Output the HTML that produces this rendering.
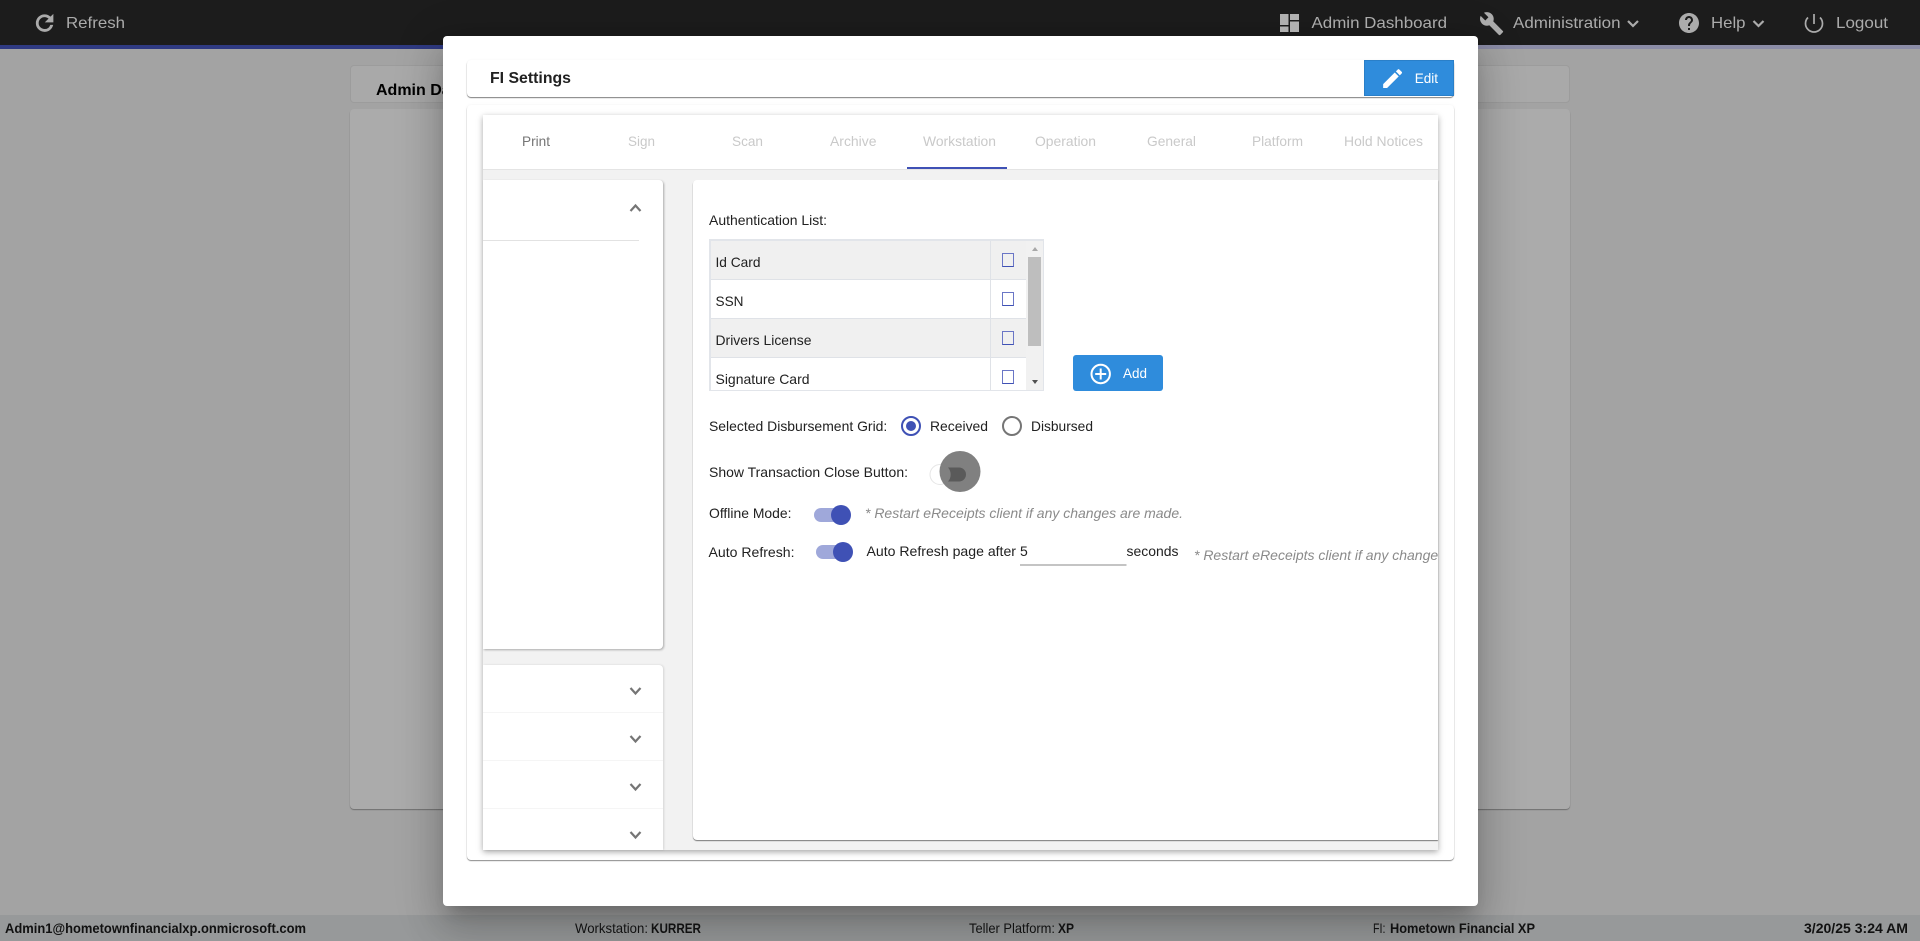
<!DOCTYPE html>
<html><head><meta charset="utf-8"><title>FI Settings</title>
<style>
html,body{margin:0;padding:0;width:1920px;height:941px;overflow:hidden;background:#a3a3a3;font-family:"Liberation Sans",sans-serif}
div{position:absolute;box-sizing:border-box}
svg{position:absolute;left:0;top:0}
text{font-family:"Liberation Sans",sans-serif;font-size:14px;fill:#212121}
.n{fill:#ababab;font-size:16px}
.t{fill:#c9c9c9}
.f{font-size:14px;fill:#111}
.b{font-weight:bold}
.i{font-style:italic;fill:#8a8a8a}
</style></head><body>
<div style="left:0;top:0;width:1920px;height:45px;background:#1c1c1c"></div>
<div style="left:0;top:45px;width:443px;height:4px;background:#2f3a82"></div>
<div style="left:1478px;top:45px;width:442px;height:4px;background:#8b8ca6"></div>
<div style="left:350px;top:65px;width:1220px;height:38px;background:#a9a9a9;border:1px solid #9c9c9c;border-radius:4px;overflow:hidden"><span style="position:absolute;left:25px;top:16px;font-size:16px;font-weight:bold;color:#000;white-space:nowrap">Admin Dashboard</span></div>
<div style="left:350px;top:109px;width:1220px;height:700px;background:#ababab;border-radius:4px;box-shadow:0 1px 1px #6f6f6f"></div>
<div style="left:0;top:915px;width:1920px;height:26px;background:#97999a"></div>
<div style="left:443px;top:36px;width:1035px;height:870px;background:#fff;border-radius:4px;box-shadow:0 11px 15px -7px rgba(0,0,0,.2),0 24px 38px 3px rgba(0,0,0,.14),0 9px 46px 8px rgba(0,0,0,.12)"></div>
<div style="left:467px;top:60px;width:987px;height:37px;background:#fff;border-radius:4px;box-shadow:0 1px 1px rgba(0,0,0,.5),0 0 2px rgba(0,0,0,.04)"></div>
<div style="left:1364px;top:60px;width:90px;height:36px;background:#2f8cdc;border:1px solid #2a7fc8"></div>
<div style="left:467px;top:105px;width:987px;height:755px;background:#fff;border-radius:4px;box-shadow:0 1px 1px rgba(0,0,0,.45),0 0 3px rgba(0,0,0,.05)"></div>
<div style="left:483px;top:115px;width:955px;height:735px;background:#f2f2f2;box-shadow:0 2px 6px rgba(0,0,0,.35)"></div>
<div style="left:483px;top:115px;width:955px;height:55px;background:#fff;border-bottom:1px solid #e4e4e4"></div>
<div style="left:907px;top:167px;width:100px;height:2px;background:#3f51b5"></div>
<div style="left:483px;top:180px;width:180px;height:469px;background:#fff;border-radius:0 4px 4px 0;box-shadow:1px 1px 2px rgba(0,0,0,.3)"></div>
<div style="left:483px;top:240px;width:156px;height:1px;background:#e2e2e2"></div>
<div style="left:483px;top:665px;width:180px;height:185px;background:#fff;border-radius:0 4px 0 0;box-shadow:1px 0 2px rgba(0,0,0,.12)"></div>
<div style="left:483px;top:712px;width:180px;height:1px;background:#f5f5f5"></div>
<div style="left:483px;top:760px;width:180px;height:1px;background:#f5f5f5"></div>
<div style="left:483px;top:808px;width:180px;height:1px;background:#f5f5f5"></div>
<div style="left:693px;top:180px;width:745px;height:660px;background:#fff;border-radius:4px 0 0 4px;box-shadow:0 1px 1px rgba(0,0,0,.5)"></div>
<!-- table -->
<div style="left:709px;top:239px;width:335px;height:152px;background:#f1f1f1;border:2px solid #e2e5ea;border-width:2px 1px 1px 2px;overflow:hidden">
<div style="left:0;top:0;width:315px;height:39px;background:#f0f0f0;border-bottom:1px solid #dfe2e7"></div>
<div style="left:0;top:39px;width:315px;height:39px;background:#fff;border-bottom:1px solid #dfe2e7"></div>
<div style="left:0;top:78px;width:315px;height:39px;background:#f0f0f0;border-bottom:1px solid #dfe2e7"></div>
<div style="left:0;top:117px;width:315px;height:39px;background:#fff"></div>
<div style="left:279px;top:0;width:1px;height:152px;background:#dfe2e7"></div>
<div style="left:317px;top:16px;width:13px;height:89px;background:#bebebe"></div>
</div>
<div style="left:1002px;top:253px;width:12px;height:14px;border:1px solid #6a76c6;border-bottom-color:#3f51b5;background:transparent"></div>
<div style="left:1002px;top:292px;width:12px;height:14px;border:1px solid #6a76c6;border-bottom-color:#3f51b5"></div>
<div style="left:1002px;top:331px;width:12px;height:14px;border:1px solid #6a76c6;border-bottom-color:#3f51b5"></div>
<div style="left:1002px;top:370px;width:12px;height:14px;border:1px solid #6a76c6;border-bottom-color:#3f51b5"></div>
<div style="left:1073px;top:355px;width:90px;height:36px;background:#2f8cdc;border-radius:3px"></div>

<svg width="1920" height="941" viewBox="0 0 1920 941" xmlns="http://www.w3.org/2000/svg">
<defs><clipPath id="c"><rect x="693" y="180" width="745" height="660"/></clipPath></defs>
<!-- top nav -->
<path transform="translate(32 10.5) scale(1.05)" fill="#ababab" stroke="#ababab" stroke-width=".7" d="M17.65 6.35C16.2 4.9 14.21 4 12 4c-4.42 0-7.99 3.58-7.99 8s3.57 8 7.99 8c3.73 0 6.84-2.55 7.73-6h-2.08c-.82 2.33-3.04 4-5.65 4-3.31 0-6-2.69-6-6s2.69-6 6-6c1.66 0 3.14.69 4.22 1.78L13 11h7V4l-2.35 2.35z"/>
<text class="n" x="66" y="28" textLength="59" lengthAdjust="spacingAndGlyphs">Refresh</text>
<g fill="#b0b0b0">
<rect x="1280" y="14" width="8.5" height="11"/>
<rect x="1280" y="26.5" width="8.5" height="5.5"/>
<rect x="1290" y="14" width="9" height="6"/>
<rect x="1290" y="21.5" width="9" height="10.5"/>
</g>
<text class="n" x="1311.5" y="28" textLength="135.5" lengthAdjust="spacingAndGlyphs">Admin Dashboard</text>
<path transform="translate(1479 11) scale(1.05)" fill="#ababab" d="M22.7 19l-9.1-9.1c.9-2.3.4-5-1.5-6.9-2-2-5-2.4-7.4-1.3L9 6 6 9 1.6 4.7C.4 7.1.9 10.1 2.9 12.1c1.9 1.9 4.6 2.4 6.9 1.5l9.1 9.1c.4.4 1 .4 1.4 0l2.3-2.3c.5-.4.5-1.1.1-1.4z"/>
<text class="n" x="1513" y="28" textLength="107.5" lengthAdjust="spacingAndGlyphs">Administration</text>
<path d="M1628 21l5 5 5-5" fill="none" stroke="#ababab" stroke-width="2.2"/>
<path transform="translate(1677 11)" fill="#ababab" d="M12 2C6.48 2 2 6.48 2 12s4.48 10 10 10 10-4.48 10-10S17.52 2 12 2zm1 17h-2v-2h2v2zm2.07-7.75l-.9.92C13.45 12.9 13 13.5 13 15h-2v-.5c0-1.1.45-2.1 1.17-2.83l1.24-1.26c.37-.36.59-.86.59-1.41 0-1.1-.9-2-2-2s-2 .9-2 2H8c0-2.21 1.79-4 4-4s4 1.79 4 4c0 .88-.36 1.68-.93 2.25z"/>
<text class="n" x="1711" y="28" textLength="34.5" lengthAdjust="spacingAndGlyphs">Help</text>
<path d="M1753.5 21l5 5 5-5" fill="none" stroke="#ababab" stroke-width="2.2"/>
<path d="M1808 17.5a8.5 8.5 0 1 0 12 0M1814 14v10" fill="none" stroke="#ababab" stroke-width="1.7"/>
<text class="n" x="1836" y="28" textLength="52" lengthAdjust="spacingAndGlyphs">Logout</text>
<!-- header -->
<text x="490" y="83" class="b" style="font-size:16px" textLength="81" lengthAdjust="spacingAndGlyphs">FI Settings</text>
<path transform="translate(1380 66) scale(1.05)" fill="#fff" d="M3 17.25V21h3.75L17.81 9.94l-3.75-3.75L3 17.25zM20.71 7.04c.39-.39.39-1.02 0-1.41l-2.34-2.34c-.39-.39-1.02-.39-1.41 0l-1.83 1.83 3.75 3.75 1.83-1.83z"/>
<text x="1414.7" y="83" style="fill:#fff" textLength="23.3" lengthAdjust="spacingAndGlyphs">Edit</text>
<!-- tabs -->
<text x="522" y="146" style="fill:#757575" textLength="28" lengthAdjust="spacingAndGlyphs">Print</text>
<text class="t" x="628" y="146" textLength="27" lengthAdjust="spacingAndGlyphs">Sign</text>
<text class="t" x="732" y="146" textLength="31" lengthAdjust="spacingAndGlyphs">Scan</text>
<text class="t" x="830" y="146" textLength="46.5" lengthAdjust="spacingAndGlyphs">Archive</text>
<text class="t" x="923" y="146" textLength="73" lengthAdjust="spacingAndGlyphs">Workstation</text>
<text class="t" x="1035" y="146" textLength="61" lengthAdjust="spacingAndGlyphs">Operation</text>
<text class="t" x="1147" y="146" textLength="49" lengthAdjust="spacingAndGlyphs">General</text>
<text class="t" x="1252" y="146" textLength="51" lengthAdjust="spacingAndGlyphs">Platform</text>
<text class="t" x="1344" y="146" textLength="79" lengthAdjust="spacingAndGlyphs">Hold Notices</text>
<!-- chevrons -->
<g fill="none" stroke="#757575" stroke-width="2.2">
<path d="M630.5 211l5-5.5 5 5.5"/>
<path d="M630.5 688l5 5.5 5-5.5"/>
<path d="M630.5 736l5 5.5 5-5.5"/>
<path d="M630.5 784l5 5.5 5-5.5"/>
<path d="M630.5 832l5 5.5 5-5.5"/>
</g>
<!-- list -->
<text x="709" y="225" textLength="118" lengthAdjust="spacingAndGlyphs">Authentication List:</text>
<text x="715.5" y="267" textLength="45" lengthAdjust="spacingAndGlyphs">Id Card</text>
<text x="715.5" y="306" textLength="28" lengthAdjust="spacingAndGlyphs">SSN</text>
<text x="715.5" y="345" textLength="96" lengthAdjust="spacingAndGlyphs">Drivers License</text>
<text x="715.5" y="384" textLength="94" lengthAdjust="spacingAndGlyphs">Signature Card</text>
<path d="M1032 251l3-4 3 4z" fill="#a8a8a8"/>
<path d="M1032 380l3 4 3-4z" fill="#505050"/>
<!-- add -->
<circle cx="1100.7" cy="374" r="9.2" fill="none" stroke="#fff" stroke-width="2"/>
<path d="M1100.7 368.5v11M1095.2 374h11" stroke="#fff" stroke-width="2"/>
<text x="1123" y="378" style="fill:#fff" textLength="24" lengthAdjust="spacingAndGlyphs">Add</text>
<!-- radios -->
<text x="709" y="431" textLength="178.3" lengthAdjust="spacingAndGlyphs">Selected Disbursement Grid:</text>
<circle cx="911" cy="426" r="9" fill="none" stroke="#3f51b5" stroke-width="2"/>
<circle cx="911" cy="426" r="5" fill="#3f51b5"/>
<text x="930" y="431" textLength="58" lengthAdjust="spacingAndGlyphs">Received</text>
<circle cx="1012" cy="426" r="9" fill="none" stroke="#757575" stroke-width="2"/>
<text x="1031" y="431" textLength="62" lengthAdjust="spacingAndGlyphs">Disbursed</text>
<!-- show transaction toggle -->
<text x="709" y="477" textLength="199" lengthAdjust="spacingAndGlyphs">Show Transaction Close Button:</text>
<circle cx="940" cy="474.5" r="10" fill="#fff" stroke="#e6e6e6" stroke-width="1"/>
<circle cx="960" cy="471.5" r="20.5" fill="#808080"/>
<path d="M948 467.5h11a7 7 0 0 1 0 14h-11a10.5 10.5 0 0 0 0-14z" fill="#5a5a5a"/>
<!-- offline -->
<text x="709" y="518" textLength="82.5" lengthAdjust="spacingAndGlyphs">Offline Mode:</text>
<rect x="814" y="508" width="34" height="14" rx="7" fill="#9fa8da"/>
<circle cx="841" cy="515" r="10" fill="#3f51b5"/>
<text class="i" x="865" y="518" textLength="318" lengthAdjust="spacingAndGlyphs">* Restart eReceipts client if any changes are made.</text>
<!-- auto refresh -->
<text x="708.5" y="557" textLength="86" lengthAdjust="spacingAndGlyphs">Auto Refresh:</text>
<rect x="816" y="545" width="34" height="14" rx="7" fill="#9fa8da"/>
<circle cx="843" cy="552" r="10" fill="#3f51b5"/>
<text x="866.5" y="556" textLength="149.5" lengthAdjust="spacingAndGlyphs">Auto Refresh page after</text>
<text x="1020" y="556">5</text>
<rect x="1020" y="564.5" width="106.5" height="1" fill="#8a8a8a"/>
<text x="1126.5" y="556" textLength="52" lengthAdjust="spacingAndGlyphs">seconds</text>
<g clip-path="url(#c)"><text class="i" x="1194" y="560" textLength="318" lengthAdjust="spacingAndGlyphs">* Restart eReceipts client if any changes are made.</text></g>
<!-- footer -->
<text class="f b" x="5" y="933" textLength="301" lengthAdjust="spacingAndGlyphs">Admin1@hometownfinancialxp.onmicrosoft.com</text>
<text class="f" x="575" y="933" textLength="73" lengthAdjust="spacingAndGlyphs">Workstation:</text>
<text class="f b" x="651" y="933" textLength="50" lengthAdjust="spacingAndGlyphs">KURRER</text>
<text class="f" x="969" y="933" textLength="86" lengthAdjust="spacingAndGlyphs">Teller Platform:</text>
<text class="f b" x="1058" y="933" textLength="16" lengthAdjust="spacingAndGlyphs">XP</text>
<text class="f" x="1373" y="933" textLength="12.5" lengthAdjust="spacingAndGlyphs">FI:</text>
<text class="f b" x="1390" y="933" textLength="145" lengthAdjust="spacingAndGlyphs">Hometown Financial XP</text>
<text class="f b" x="1804" y="933" textLength="104" lengthAdjust="spacingAndGlyphs">3/20/25 3:24 AM</text>
</svg>
</body></html>
